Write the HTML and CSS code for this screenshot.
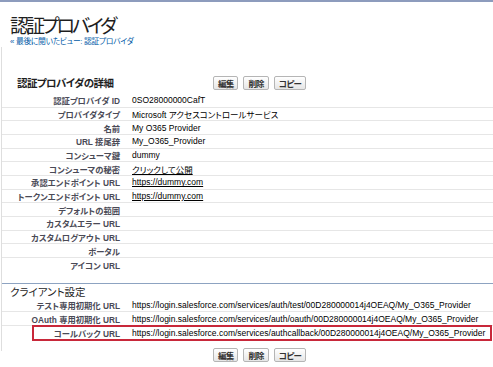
FILE: index.html
```html
<!DOCTYPE html>
<html lang="ja">
<head>
<meta charset="utf-8">
<title>認証プロバイダ</title>
<link rel="stylesheet" href="styles.css">
</head>
<body>
<div class="topline"></div>
<header class="header">
  <h1 class="title">認証プロバイダ</h1>
  <div class="breadcrumb">« <a href="#">最後に閲いたビュー: 認証プロバイダ</a></div>
</header>
<div class="page">
  <div class="pb-header">
    <h2 class="pb-title">認証プロバイダの詳細</h2>
    <div class="buttons">
      <button class="btn">編集</button>
      <button class="btn">削除</button>
      <button class="btn">コピー</button>
    </div>
  </div>
  <div class="rows">
    <div class="row"><div class="label">認証プロバイダ ID</div><div class="value">0SO28000000CafT</div></div>
    <div class="row"><div class="label">プロバイダタイプ</div><div class="value">Microsoft アクセスコントロールサービス</div></div>
    <div class="row"><div class="label">名前</div><div class="value">My O365 Provider</div></div>
    <div class="row"><div class="label">URL 接尾辞</div><div class="value">My_O365_Provider</div></div>
    <div class="row"><div class="label">コンシューマ鍵</div><div class="value">dummy</div></div>
    <div class="row"><div class="label">コンシューマの秘密</div><div class="value"><a class="plain-link" href="#">クリックして公開</a></div></div>
    <div class="row"><div class="label">承認エンドポイント URL</div><div class="value"><a class="plain-link" href="#">https://dummy.com</a></div></div>
    <div class="row"><div class="label">トークンエンドポイント URL</div><div class="value"><a class="plain-link" href="#">https://dummy.com</a></div></div>
    <div class="row"><div class="label">デフォルトの範囲</div><div class="value"></div></div>
    <div class="row"><div class="label">カスタムエラー URL</div><div class="value"></div></div>
    <div class="row"><div class="label">カスタムログアウト URL</div><div class="value"></div></div>
    <div class="row"><div class="label">ポータル</div><div class="value"></div></div>
    <div class="row row-last"><div class="label">アイコン URL</div><div class="value"></div></div>
  </div>
  <div class="section">
    <h3 class="section-title">クライアント設定</h3>
    <div class="row"><div class="label">テスト専用初期化 URL</div><div class="value">https://login.salesforce.com/services/auth/test/00D280000014j4OEAQ/My_O365_Provider</div></div>
    <div class="row"><div class="label">OAuth 専用初期化 URL</div><div class="value">https://login.salesforce.com/services/auth/oauth/00D280000014j4OEAQ/My_O365_Provider</div></div>
    <div class="row row-last row-marked"><div class="label">コールバック URL</div><div class="value">https://login.salesforce.com/services/authcallback/00D280000014j4OEAQ/My_O365_Provider</div></div>
  </div>
</div>
<div class="bottom-buttons">
  <button class="btn">編集</button>
  <button class="btn">削除</button>
  <button class="btn">コピー</button>
</div>
</body>
</html>
```

FILE: styles.css
```css
html, body {
  margin: 0;
  padding: 0;
  background: #ffffff;
}
body {
  width: 493px;
  overflow: hidden;
  font-family: "Liberation Sans", "Noto Sans CJK JP", sans-serif;
  font-feature-settings: "palt";
  color: #000;
}
.topline {
  height: 2px;
  background: #8d9cbd;
}
.header {
  padding: 12px 0 0 10px;
}
.title {
  margin: 0;
  font-size: 19px;
  line-height: 22px;
  letter-spacing: -3px;
  font-weight: normal;
  color: #1e1e1e;
  font-family: "Noto Sans CJK JP", sans-serif;
}
.breadcrumb {
  margin-top: 1px;
  font-size: 7.8px;
  line-height: 10px;
  letter-spacing: -0.3px;
  color: #015ba7;
}
.breadcrumb a {
  color: #015ba7;
  text-decoration: none;
}
.page {
  margin-left: 1px;
  border-left: 1px solid #dedede;
  padding-top: 28px;
  padding-bottom: 11px;
}
.pb-header {
  display: flex;
  align-items: center;
  height: 15px;
  margin-bottom: 4px;
}
.pb-title {
  margin: 0;
  padding-left: 15px;
  width: 211px;
  box-sizing: border-box;
  font-size: 10.5px;
  letter-spacing: -0.6px;
  font-weight: bold;
  color: #1e1e1e;
  font-family: "Noto Sans CJK JP", sans-serif;
}
.buttons, .bottom-buttons {
  display: flex;
  gap: 5px;
}
.btn {
  height: 14px;
  padding: 0 4px;
  border: 1px solid #b5b5b5;
  border-radius: 2px;
  background: linear-gradient(#ffffff, #e6e6e6);
  font-family: "Noto Sans CJK JP", sans-serif;
  font-feature-settings: "palt";
  font-size: 8.5px;
  line-height: 12px;
  letter-spacing: -0.8px;
  font-weight: bold;
  color: #333;
}
.row {
  display: grid;
  grid-template-columns: 118px minmax(0, 1fr);
  column-gap: 12px;
  align-items: center;
  height: 13.67px;
  box-sizing: border-box;
  border-bottom: 1px solid #e6e6e6;
}
.row-last {
  border-bottom: none;
}
.label {
  text-align: right;
  font-size: 8.3px;
  font-weight: bold;
  color: #4a4a56;
  white-space: nowrap;
}
.value {
  font-size: 8.5px;
  color: #000;
  white-space: nowrap;
}
.plain-link {
  color: #000;
  text-decoration: underline;
}
.section {
  margin-top: 11px;
  border-top: 1px solid #8da3c1;
}
.section-title {
  margin: 0;
  height: 15px;
  padding-left: 8px;
  font-size: 10.5px;
  line-height: 15px;
  font-weight: normal;
  color: #1e1e1e;
  font-family: "Noto Sans CJK JP", sans-serif;
}
.row-marked {
  position: relative;
}
.row-marked::after {
  content: "";
  position: absolute;
  left: 30px;
  right: 1px;
  top: -1px;
  bottom: -1px;
  border: 2px solid #c8283a;
}
.bottom-buttons {
  margin-top: -3px;
  padding-left: 213px;
}
```
